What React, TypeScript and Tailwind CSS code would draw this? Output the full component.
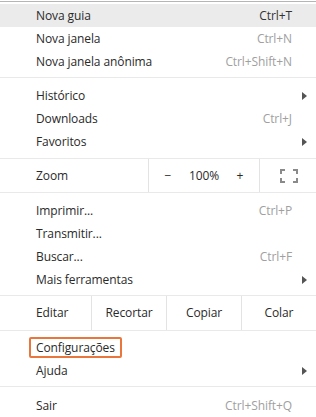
import React from "react";

type Item = { label: string; shortcut?: string; arrow?: boolean; active?: boolean; boxed?: boolean };

function Arrow() {
  return (
    <svg width="5" height="8" viewBox="0 0 5 8" className="fill-[#555]">
      <path d="M0 0 L5 4 L0 8 Z" />
    </svg>
  );
}

function Row({ label, shortcut, arrow, active, boxed }: Item) {
  return (
    <div
      className={`flex h-[23px] items-center pl-[36px] pr-[24px] ${active ? "bg-[#ebebeb]" : ""}`}
    >
      <span
        className={
          boxed
            ? "-ml-[7px] -my-[2px] rounded-[2px] border-2 border-[#e9773d] px-[5px] leading-[17px]"
            : ""
        }
      >
        {label}
      </span>
      <span className="flex-1" />
      {shortcut && (
        <span className={active ? "text-[#333]" : "text-[#a0a0a0]"}>{shortcut}</span>
      )}
      {arrow && (
        <span className="-mr-[15px]">
          <Arrow />
        </span>
      )}
    </div>
  );
}

function Separator() {
  return <div className="h-px bg-[#e9e9e9]" />;
}

function FullscreenIcon() {
  return (
    <svg width="18" height="14" viewBox="0 0 18 14" fill="none" stroke="#8a8a8a" strokeWidth="2">
      <path d="M1 5 V1 H5 M13 1 H17 V5 M17 9 V13 H13 M5 13 H1 V9" />
    </svg>
  );
}

export default function App() {
  return (
    <div
      className="h-[417px] w-[316px] overflow-hidden bg-white text-[12px] tracking-[-0.1px] text-[#2a2a2a]"
      style={{ fontFamily: '"Open Sans", Lato, sans-serif' }}
    >
      <div className="mt-px h-px bg-[#b5b5b5]" />
      <div className="pt-[2px] pb-[4px]">
        <Row label="Nova guia" shortcut="Ctrl+T" active />
        <Row label="Nova janela" shortcut="Ctrl+N" />
        <Row label="Nova janela anônima" shortcut="Ctrl+Shift+N" />
      </div>
      <Separator />
      <div className="pt-[6px] pb-[5px]">
        <Row label="Histórico" arrow />
        <Row label="Downloads" shortcut="Ctrl+J" />
        <Row label="Favoritos" arrow />
      </div>
      <Separator />
      <div className="flex h-[33px] items-center">
        <span className="w-[148px] pl-[36px]">Zoom</span>
        <div className="flex h-full w-[112px] items-center border-l border-r border-[#e3e3e3]">
          <span className="w-[38px] text-center">−</span>
          <span className="flex-1 text-center">100%</span>
          <span className="w-[38px] text-center">+</span>
        </div>
        <div className="flex flex-1 items-center justify-center pl-[2px]">
          <FullscreenIcon />
        </div>
      </div>
      <Separator />
      <div className="pt-[6px] pb-[4px]">
        <Row label="Imprimir..." shortcut="Ctrl+P" />
        <Row label="Transmitir..." />
        <Row label="Buscar..." shortcut="Ctrl+F" />
        <Row label="Mais ferramentas" arrow />
      </div>
      <Separator />
      <div className="flex h-[34px] items-center">
        <span className="w-[91px] pl-[36px]">Editar</span>
        <span className="flex h-full w-[75px] items-center justify-center border-l border-[#e3e3e3]">Recortar</span>
        <span className="flex h-full w-[75px] items-center justify-center border-l border-[#e3e3e3]">Copiar</span>
        <span className="flex h-full flex-1 items-center justify-center border-l border-[#e3e3e3]">Colar</span>
      </div>
      <Separator />
      <div className="pt-[5px] pb-[4px]">
        <Row label="Configurações" boxed />
        <Row label="Ajuda" arrow />
      </div>
      <Separator />
      <div className="pt-[7px]">
        <Row label="Sair" shortcut="Ctrl+Shift+Q" />
      </div>
      <div className="mt-[1px] h-px bg-[#b5b5b5]" />
    </div>
  );
}
